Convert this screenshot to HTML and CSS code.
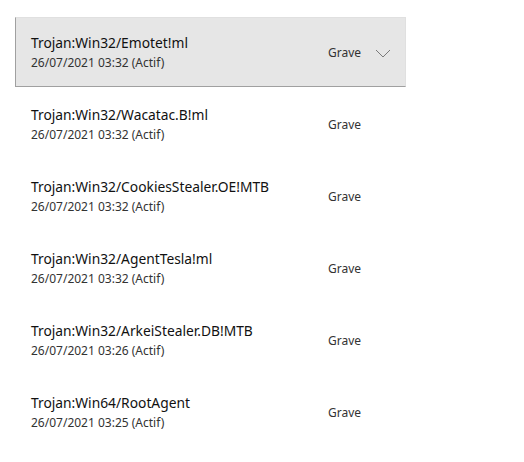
FILE: index.html
```html
<!DOCTYPE html>
<html lang="fr">
<head>
<meta charset="utf-8">
<link rel="stylesheet" href="styles.css">
</head>
<body>
<div class="list">
  <div class="row selected">
    <div class="info">
      <div class="title">Trojan:Win32/Emotet!ml</div>
      <div class="date">26/07/2021 03:32 (Actif)</div>
    </div>
    <div class="level">Grave</div>
    <svg class="chev" width="16" height="9" viewBox="0 0 16 9"><path d="M1 1 L8 8 L15 1" fill="none" stroke="#7a7a7a" stroke-width="1"/></svg>
  </div>
  <div class="row">
    <div class="info">
      <div class="title">Trojan:Win32/Wacatac.B!ml</div>
      <div class="date">26/07/2021 03:32 (Actif)</div>
    </div>
    <div class="level">Grave</div>
  </div>
  <div class="row">
    <div class="info">
      <div class="title">Trojan:Win32/CookiesStealer.OE!MTB</div>
      <div class="date">26/07/2021 03:32 (Actif)</div>
    </div>
    <div class="level">Grave</div>
  </div>
  <div class="row">
    <div class="info">
      <div class="title">Trojan:Win32/AgentTesla!ml</div>
      <div class="date">26/07/2021 03:32 (Actif)</div>
    </div>
    <div class="level">Grave</div>
  </div>
  <div class="row">
    <div class="info">
      <div class="title">Trojan:Win32/ArkeiStealer.DB!MTB</div>
      <div class="date">26/07/2021 03:26 (Actif)</div>
    </div>
    <div class="level">Grave</div>
  </div>
  <div class="row">
    <div class="info">
      <div class="title">Trojan:Win64/RootAgent</div>
      <div class="date">26/07/2021 03:25 (Actif)</div>
    </div>
    <div class="level">Grave</div>
  </div>
</div>
</body>
</html>
```
FILE: styles.css
```css
html, body {
  margin: 0;
  padding: 0;
  background: #ffffff;
}
body {
  font-family: "Noto Sans", "Open Sans", sans-serif;
}
.list {
  display: flex;
  flex-direction: column;
  gap: 2px;
  padding: 17px 0 0 15px;
  width: 391px;
}
.row {
  box-sizing: border-box;
  height: 70px;
  display: flex;
  align-items: center;
  padding-left: 15px;
  border-left: 1px solid transparent;
  border-bottom: 1px solid transparent;
  border-top: 1px solid transparent;
  border-right: 1px solid transparent;
}
.row.selected {
  background: #e6e6e6;
  border-left-color: #a0a0a0;
  border-bottom-color: #a0a0a0;
  border-top-color: #e0e0e0;
  border-right-color: #e0e0e0;
}
.info {
  align-self: flex-start;
  width: 297px;
  display: flex;
  flex-direction: column;
  padding-top: 15px;
}
.title {
  font-size: 13.8px;
  line-height: 19px;
  color: #111111;
  white-space: nowrap;
}
.date {
  margin-top: 3px;
  font-size: 12px;
  line-height: 16px;
  color: #333333;
  white-space: nowrap;
}
.level {
  font-size: 12px;
  color: #333333;
  width: 47px;
  padding-top: 1px;
}
.chev {
  display: block;
  margin-top: 2px;
}
```
